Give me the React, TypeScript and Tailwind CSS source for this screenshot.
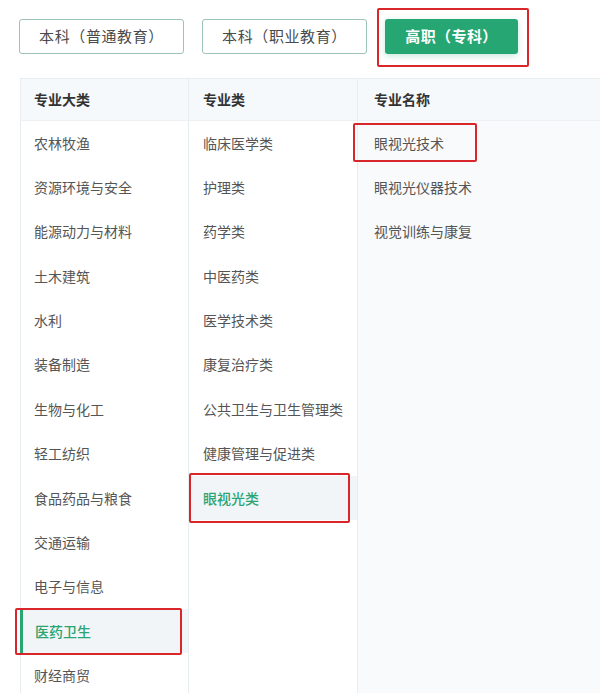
const majors = [
  "农林牧渔",
  "资源环境与安全",
  "能源动力与材料",
  "土木建筑",
  "水利",
  "装备制造",
  "生物与化工",
  "轻工纺织",
  "食品药品与粮食",
  "交通运输",
  "电子与信息",
  "医药卫生",
  "财经商贸",
];

const categories = [
  "临床医学类",
  "护理类",
  "药学类",
  "中医药类",
  "医学技术类",
  "康复治疗类",
  "公共卫生与卫生管理类",
  "健康管理与促进类",
  "眼视光类",
];

const names = ["眼视光技术", "眼视光仪器技术", "视觉训练与康复"];

const font = { fontFamily: '"Noto Sans CJK SC", "Noto Sans", sans-serif' };

export default function App() {
  return (
    <div className="relative w-[600px] h-[693px] overflow-hidden bg-white" style={font}>
      {/* level tabs */}
      <div className="flex gap-[18px] pl-[19px] pt-[19px]">
        <button className="w-[165px] h-[35px] rounded-[3px] border border-[#9cc3b3] bg-white text-[15px] tracking-[0.6px] text-[#4a4a4a]">
          本科（普通教育）
        </button>
        <button className="w-[165px] h-[35px] rounded-[3px] border border-[#9cc3b3] bg-white text-[15px] tracking-[0.6px] text-[#4a4a4a]">
          本科（职业教育）
        </button>
        <button className="w-[133px] h-[35px] rounded-[3px] bg-[#25a673] text-[15px] tracking-[0.4px] font-bold text-white shadow-[0_2px_6px_rgba(37,166,115,0.25)]">
          高职（专科）
        </button>
      </div>

      {/* table */}
      <div className="mt-[24px] ml-[20px] flex w-[640px] border-l border-t border-[#e8edf0] text-[14px]">
        <div className="w-[168px] shrink-0 border-r border-[#e8edf0]">
          <div className="h-[42px] flex items-center pl-[13px] bg-[#f5f9fb] border-b border-[#edf1f3] font-bold text-[#333]">
            专业大类
          </div>
          {majors.map((m) => (
            <div
              key={m}
              className={
                m === "医药卫生"
                  ? "h-[44.36px] flex items-center pl-[12px] bg-[#f2f5f8] border-l-[3px] border-[#25a673] text-[#2ba471] font-medium -ml-px"
                  : "h-[44.36px] flex items-center pl-[13px] text-[#555]"
              }
            >
              {m}
            </div>
          ))}
        </div>
        <div className="w-[169px] shrink-0 border-r border-[#e8edf0]">
          <div className="h-[42px] flex items-center pl-[14px] bg-[#f5f9fb] border-b border-[#edf1f3] font-bold text-[#333]">
            专业类
          </div>
          {categories.map((c) => (
            <div
              key={c}
              className={
                c === "眼视光类"
                  ? "h-[44.36px] flex items-center pl-[14px] bg-[#f2f5f8] text-[#2ba471] font-medium"
                  : "h-[44.36px] flex items-center pl-[14px] text-[#555]"
              }
            >
              {c}
            </div>
          ))}
        </div>
        <div className="flex-1 bg-[#f8fafc] min-h-[640px]">
          <div className="h-[42px] flex items-center pl-[16px] bg-[#f5f9fb] border-b border-[#edf1f3] font-bold text-[#333]">
            专业名称
          </div>
          {names.map((n) => (
            <div key={n} className="h-[44.36px] flex items-center pl-[16px] text-[#555]">
              {n}
            </div>
          ))}
        </div>
      </div>

      {/* red annotation boxes */}
      <div className="absolute left-[377px] top-[8px] w-[152px] h-[59px] rounded-[2px] border-2 border-[#d8262a]" />
      <div className="absolute left-[353px] top-[123px] w-[124px] h-[39px] rounded-[2px] border-2 border-[#d8262a]" />
      <div className="absolute left-[189px] top-[473px] w-[161px] h-[50px] rounded-[2px] border-2 border-[#d8262a]" />
      <div className="absolute left-[15px] top-[608px] w-[167px] h-[47px] rounded-[2px] border-2 border-[#d8262a]" />
    </div>
  );
}
